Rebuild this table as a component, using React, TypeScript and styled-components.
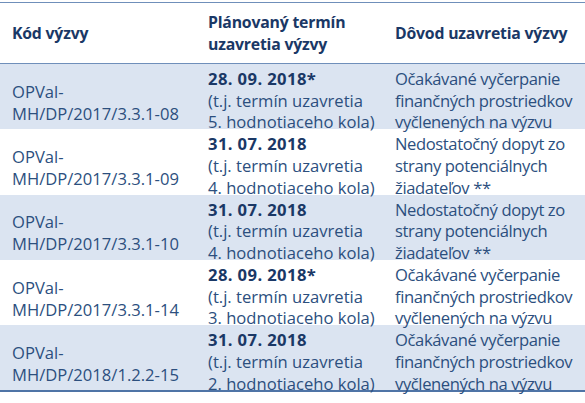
import * as React from "react";
import styled, { createGlobalStyle } from "styled-components";

const GlobalStyle = createGlobalStyle`
  html, body {
    margin: 0;
    padding: 0;
    background: #fff;
  }
  body {
    font-family: "Open Sans", Lato, "Liberation Sans", sans-serif;
  }
`;

interface Call {
  code: string;
  date: string;
  star: boolean;
  round: number;
  reason: string[];
}

const calls: Call[] = [
  {
    code: "MH/DP/2017/3.3.1-08",
    date: "28. 09. 2018",
    star: true,
    round: 5,
    reason: ["Očakávané vyčerpanie", "finančných prostriedkov", "vyčlenených na výzvu"],
  },
  {
    code: "MH/DP/2017/3.3.1-09",
    date: "31. 07. 2018",
    star: false,
    round: 4,
    reason: ["Nedostatočný dopyt zo", "strany potenciálnych", "žiadateľov **"],
  },
  {
    code: "MH/DP/2017/3.3.1-10",
    date: "31. 07. 2018",
    star: false,
    round: 4,
    reason: ["Nedostatočný dopyt zo", "strany potenciálnych", "žiadateľov **"],
  },
  {
    code: "MH/DP/2017/3.3.1-14",
    date: "28. 09. 2018",
    star: true,
    round: 3,
    reason: ["Očakávané vyčerpanie", "finančných prostriedkov", "vyčlenených na výzvu"],
  },
  {
    code: "MH/DP/2018/1.2.2-15",
    date: "31. 07. 2018",
    star: false,
    round: 2,
    reason: ["Očakávané vyčerpanie", "finančných prostriedkov", "vyčlenených na výzvu"],
  },
];

const App: React.FC = () => {
  return (
    <>
      <GlobalStyle />
      <Page>
        <Table>
          <colgroup>
            <col style={{ width: 196 }} />
            <col style={{ width: 187 }} />
            <col />
          </colgroup>
          <thead>
            <HeadRow>
              <HeadCell>Kód výzvy</HeadCell>
              <HeadCell>
                Plánovaný termín
                <br />
                uzavretia výzvy
              </HeadCell>
              <HeadCell>Dôvod uzavretia výzvy</HeadCell>
            </HeadRow>
          </thead>
          <tbody>
            {calls.map((c, i) => (
              <Row key={c.code} $shaded={i % 2 === 0}>
                <CodeCell>
                  OPVal-
                  <br />
                  {c.code}
                </CodeCell>
                <Cell>
                  <Lines>
                    <DateText>
                      {c.date}
                      {c.star && "*"}
                    </DateText>
                    <br />
                    (t.j. termín uzavretia
                    <br />
                    {c.round}. hodnotiaceho kola)
                  </Lines>
                </Cell>
                <Cell>
                  <Lines $tight>
                    {c.reason.map((line, j) => (
                      <React.Fragment key={j}>
                        {j > 0 && <br />}
                        {line}
                      </React.Fragment>
                    ))}
                  </Lines>
                </Cell>
              </Row>
            ))}
          </tbody>
        </Table>
      </Page>
    </>
  );
};

export default App;

const Page = styled.div`
  width: 585px;
  height: 403px;
  padding-top: 2px;
  box-sizing: border-box;
  overflow: hidden;
`;

const Table = styled.table`
  width: 585px;
  border-collapse: collapse;
  table-layout: fixed;
  border-top: 1px solid #6f8fba;
  border-bottom: 2px solid #4f74a6;
  font-size: 16.6px;
  line-height: 21.7px;
  color: #2c4f7e;
`;

const HeadRow = styled.tr`
  height: 61px;
`;

const HeadCell = styled.th`
  text-align: left;
  vertical-align: middle;
  font-size: 15.8px;
  font-weight: 700;
  letter-spacing: -0.2px;
  color: #1a3866;
  padding: 2px 0 0 12px;
  border-bottom: 1px solid #6f8fba;
`;

const Row = styled.tr<{ $shaded: boolean }>`
  height: 65.4px;
  background: ${(p) => (p.$shaded ? "#dbe4f1" : "#ffffff")};
`;

const CodeCell = styled.td`
  vertical-align: middle;
  padding: 12px 0 0 12px;
  white-space: nowrap;
`;

const Cell = styled.td`
  vertical-align: top;
  padding: 0 0 0 12px;
  white-space: nowrap;
`;

const Lines = styled.div<{ $tight?: boolean }>`
  margin: 4px 0 -4px;
  letter-spacing: ${(p) => (p.$tight ? "-0.4px" : "0")};
`;

const DateText = styled.span`
  font-weight: 700;
  letter-spacing: 0.4px;
  color: #1a3866;
`;
